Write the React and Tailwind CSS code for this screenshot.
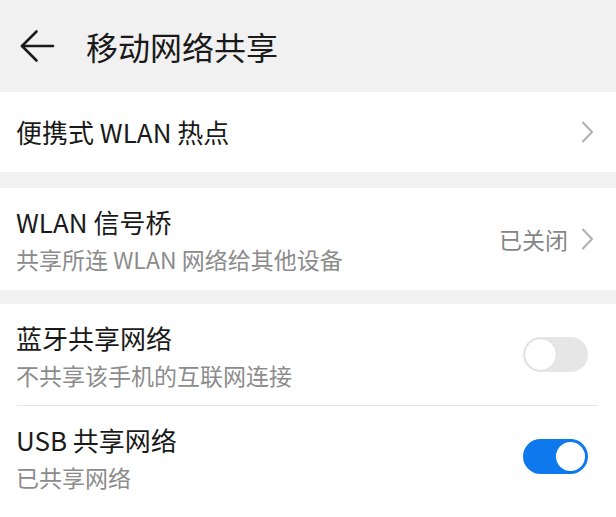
import React from "react";

const font = { fontFamily: '"Noto Sans CJK SC", "Noto Sans", sans-serif' };

function Chevron() {
  return (
    <svg width="13" height="22" viewBox="0 0 13 22" fill="none">
      <path d="M2 1.5 L11 11 L2 20.5" stroke="#b0b0b0" strokeWidth="2" strokeLinecap="round" strokeLinejoin="round" />
    </svg>
  );
}

function Toggle({ on }) {
  return on ? (
    <div className="w-[65px] h-[35px] rounded-full bg-[#0d79ec] flex items-center justify-end p-[3px]">
      <div className="w-[29px] h-[29px] rounded-full bg-white" />
    </div>
  ) : (
    <div className="w-[65px] h-[35px] rounded-full bg-[#e6e6e6] flex items-center justify-start p-[1px]">
      <div className="w-[33px] h-[33px] rounded-full bg-white border border-[#dcdcdc]" />
    </div>
  );
}

export default function App() {
  return (
    <div className="w-[616px] h-[517px] overflow-hidden bg-[#f1f1f1] flex flex-col" style={font}>
      {/* Header */}
      <div className="h-[92px] flex items-center shrink-0">
        <div className="pl-[19px] w-[86px] flex items-center">
          <svg width="36" height="34" viewBox="0 0 36 34" fill="none">
            <path d="M3 17 H34" stroke="#1a1a1a" strokeWidth="2.6" strokeLinecap="round" />
            <path d="M17.5 2.5 L3 17 L17.5 31.5" stroke="#1a1a1a" strokeWidth="2.6" strokeLinecap="round" strokeLinejoin="round" />
          </svg>
        </div>
        <div className="text-[32px] leading-[40px] text-[#1a1a1a] tracking-[0px]">移动网络共享</div>
      </div>

      {/* Card 1 */}
      <div className="h-[80px] bg-white flex items-center justify-between pl-[16px] pr-[22px] shrink-0">
        <div className="text-[26px] leading-[36px] text-[#1a1a1a]">便携式 WLAN 热点</div>
        <Chevron />
      </div>

      <div className="h-[16px] shrink-0" />

      {/* Card 2 */}
      <div className="h-[102px] bg-white flex items-center justify-between pl-[16px] pr-[22px] shrink-0">
        <div className="flex flex-col pt-[2px]">
          <div className="text-[26px] leading-[38px] text-[#1a1a1a]">WLAN 信号桥</div>
          <div className="text-[23px] leading-[36px] text-[#8c8c8c]">共享所连 WLAN 网络给其他设备</div>
        </div>
        <div className="flex items-center gap-[13px]">
          <span className="text-[23px] leading-[30px] text-[#858585]">已关闭</span>
          <Chevron />
        </div>
      </div>

      <div className="h-[14px] shrink-0" />

      {/* Card 3 */}
      <div className="flex-1 bg-white flex flex-col">
        <div className="h-[101px] flex items-center justify-between pl-[16px] pr-[28px]">
          <div className="flex flex-col pt-[2px]">
            <div className="text-[26px] leading-[38px] text-[#1a1a1a]">蓝牙共享网络</div>
            <div className="text-[23px] leading-[36px] text-[#8c8c8c]">不共享该手机的互联网连接</div>
          </div>
          <Toggle on={false} />
        </div>
        <div className="ml-[17px] mr-[18px] h-px bg-[#e6e6e6]" />
        <div className="h-[101px] flex items-center justify-between pl-[16px] pr-[28px]">
          <div className="flex flex-col pt-[2px]">
            <div className="text-[26px] leading-[38px] text-[#1a1a1a]">USB 共享网络</div>
            <div className="text-[23px] leading-[36px] text-[#8c8c8c]">已共享网络</div>
          </div>
          <Toggle on={true} />
        </div>
      </div>
    </div>
  );
}
